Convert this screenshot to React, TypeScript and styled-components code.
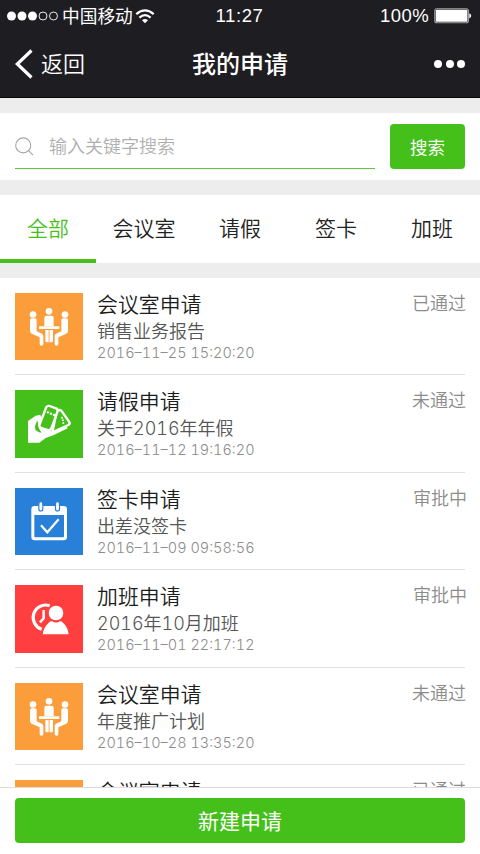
import React from "react";
import styled, { createGlobalStyle } from "styled-components";

const GREEN = "#45c01a";

const GlobalStyle = createGlobalStyle`
  * { box-sizing: border-box; }
  html, body { margin: 0; padding: 0; background: #fff; }
  body { font-family: Inter, "Noto Sans CJK SC", sans-serif; }
  button, input { font-family: inherit; border: 0; padding: 0; margin: 0; }
`;

const Screen = styled.div`
  width: 480px;
  height: 854px;
  overflow: hidden;
  display: flex;
  flex-direction: column;
  background: #ededed;
`;

const Header = styled.header`
  flex: none;
  height: 97.5px;
  background: #1e1d22;
  border-bottom: 1.5px solid #09090b;
  color: #fff;
`;

const StatusBar = styled.div`
  height: 30px;
  padding: 0 8px 0 7px;
  display: grid;
  grid-template-columns: 1fr auto 1fr;
  align-items: center;
  font-size: 18px;
  line-height: 32px;
`;

const StatusGroup = styled.div<{ $end?: boolean }>`
  display: flex;
  align-items: center;
  justify-content: ${(p) => (p.$end ? "flex-end" : "flex-start")};
  height: 30px;
`;

const Carrier = styled.span`
  margin: 1px 2px 0 3px;
  font-size: 17.7px;
`;

const Clock = styled.span`
  font-family: "Liberation Sans", sans-serif;
  font-size: 18.5px;
  letter-spacing: 0.6px;
`;

const Percent = styled.span`
  margin-right: 5px;
  font-family: "Liberation Sans", sans-serif;
  font-size: 18.5px;
  letter-spacing: 0.4px;
`;

const NavBar = styled.div`
  height: 67px;
  padding: 0 15px;
  display: grid;
  grid-template-columns: 1fr auto 1fr;
  align-items: center;
`;

const Back = styled.button`
  display: flex;
  align-items: center;
  gap: 8px;
  background: none;
  color: #fff;
  font-size: 22px;
  font-weight: 350;
  line-height: 30px;
`;

const PageTitle = styled.h1`
  margin: 2px 0 0;
  font-size: 24px;
  line-height: 34px;
  font-weight: 500;
`;

const More = styled.button`
  justify-self: end;
  display: flex;
  gap: 3.5px;
  background: none;
`;

const MoreDot = styled.i`
  width: 8px;
  height: 8px;
  border-radius: 50%;
  background: #fff;
`;

const SearchPanel = styled.form`
  flex: none;
  margin-top: 15px;
  height: 67.5px;
  padding: 11.5px 15px 0;
  display: flex;
  align-items: flex-start;
  gap: 15px;
  background: #fff;
`;

const SearchField = styled.label`
  flex: 1;
  height: 45px;
  display: flex;
  align-items: center;
  gap: 15px;
  border-bottom: 1px solid #5fc93b;
`;

const SearchInput = styled.input`
  flex: 1;
  min-width: 0;
  height: 30px;
  padding-top: 1px;
  outline: none;
  font-size: 18px;
  font-weight: 350;
  color: #333;
  &::placeholder { color: #b0b0b0; opacity: 1; }
`;

const SearchButton = styled.button`
  width: 75px;
  height: 45px;
  padding-bottom: 1px;
  border-radius: 4px;
  background: ${GREEN};
  color: #fff;
  font-size: 17.5px;
`;

const Tabs = styled.nav`
  flex: none;
  margin-top: 15px;
  height: 68px;
  display: grid;
  grid-template-columns: repeat(5, 1fr);
  background: #fff;
`;

const Tab = styled.button<{ $active?: boolean }>`
  border-bottom: 4px solid ${(p) => (p.$active ? GREEN : "transparent")};
  background: none;
  color: ${(p) => (p.$active ? GREEN : "#222")};
  font-size: 21px;
  font-weight: 350;
  white-space: nowrap;
`;

const List = styled.main`
  flex: 1;
  min-height: 0;
  margin-top: 14.5px;
  padding: 0 15px;
  overflow: hidden;
  background: #fff;
`;

const Row = styled.article`
  height: 97.55px;
  padding-top: 15px;
  display: flex;
  border-bottom: 1px solid #e0e0e0;
`;

const Tile = styled.div<{ $color: string }>`
  flex: none;
  width: 67.5px;
  height: 67.5px;
  background: ${(p) => p.$color};
  svg { display: block; }
`;

const Info = styled.div`
  flex: 1;
  margin-left: 14.5px;
  white-space: nowrap;
`;

const Title = styled.h2`
  margin: -2px 0 0;
  font-size: 20.9px;
  line-height: 28px;
  font-weight: 350;
  color: #1c1c1c;
`;

const Detail = styled.p`
  margin: 1px 0 0;
  font-size: 18px;
  line-height: 23px;
  font-weight: 350;
  color: #555;
  font-variant-numeric: tabular-nums;
`;

const Time = styled.time`
  display: block;
  font-size: 14.5px;
  line-height: 20px;
  font-weight: 300;
  font-variant-numeric: tabular-nums;
  color: #8c8c8c;
`;

const Status = styled.span<{ $shift?: boolean }>`
  margin-top: -2px;
  margin-right: ${(p) => (p.$shift ? "-2px" : "-1px")};
  font-size: 18px;
  line-height: 26px;
  font-weight: 350;
  color: #8c8c8c;
`;

const Footer = styled.footer`
  flex: none;
  height: 67.5px;
  padding: 10px 15px 0;
  border-top: 1px solid #dcdcdc;
  background: #fff;
`;

const CreateButton = styled.button`
  display: block;
  width: 100%;
  height: 45px;
  padding-bottom: 1px;
  border-radius: 4px;
  background: ${GREEN};
  color: #fff;
  font-size: 21px;
`;

const Signal = () => (
  <svg width="52" height="10" viewBox="0 0 52 10">
    {[4.5, 15, 25.5].map((x) => <circle key={x} cx={x} cy="5" r="4.5" fill="#fff" />)}
    {[36, 46.5].map((x) => <circle key={x} cx={x} cy="5" r="4" fill="none" stroke="#fff" strokeWidth="0.9" />)}
  </svg>
);

const Wifi = () => (
  <svg width="20" height="15" viewBox="0 0 20 15" fill="none" stroke="#fff" strokeWidth="2.2">
    <path d="M1.3 5.1Q10-2.2 18.7 5.1M4.4 8.6Q10 3.8 15.6 8.6" />
    <path d="M7 11.2Q10 8.6 13 11.2L10 14.2Z" fill="#fff" stroke="none" />
  </svg>
);

const Battery = () => (
  <svg width="38" height="16" viewBox="0 0 38 16">
    <rect x="0.8" y="0.8" width="33.6" height="14" rx="2" fill="none" stroke="#a5a5a8" strokeWidth="1.1" />
    <rect x="1.8" y="1.8" width="31.6" height="12" rx="0.8" fill="#fff" />
    <path d="M35.3 5.2Q37.2 6 37.2 7.8T35.3 10.4Z" fill="#fff" />
  </svg>
);

const Chevron = () => (
  <svg width="18" height="30" viewBox="0 0 18 30" fill="none" stroke="#fff" strokeWidth="3.2">
    <path d="M16.5 1.5L2.3 15L16.5 28.5" />
  </svg>
);

const Magnifier = () => (
  <svg width="19" height="19" viewBox="0 0 19 19" fill="none" stroke="#a4a4a4" strokeWidth="1.1">
    <circle cx="8.2" cy="8.4" r="7.5" />
    <path d="M13.5 13.7L18 18.2" />
  </svg>
);

const TileSvg = ({ children }: { children: React.ReactNode }) => (
  <svg width="67.5" height="67.5" viewBox="0 0 202.5 202.5" fill="#fff">{children}</svg>
);

const SEATED = "M45 81Q45 76 50 76H60Q65 76 65 81V115L81 122Q85 124 85 129V153Q85 158 79 158Q74 158 74 153V133L50 122Q45 119 45 114Z";

const MeetingIcon = () => (
  <TileSvg>
    <circle cx="54" cy="64.5" r="10" />
    <circle cx="102" cy="55" r="10" />
    <circle cx="150" cy="64.5" r="10" />
    <path d={SEATED} />
    <path d={SEATED} transform="translate(204 0) scale(-1 1)" />
    <rect x="72" y="100" width="61" height="8" rx="1" />
    <path d="M88 100V74Q88 68 94 68H110Q116 68 116 74V100Z" />
    <path d="M91 111H101V148H95Q91 148 91 144ZM103.5 111H114V144Q114 148 110 148H103.5Z" />
  </TileSvg>
);

const LeaveIcon = () => (
  <TileSvg>
    <path d="M39 93L62 77L76 74L90 120L112 124L151 106L158 115L115 136L92 144L73 158H39Z" />
    <path d="M67 91L60 108L61 120L72 127L80 128L72 116Z" fill={GREEN} />
    <path
      d="M126 61L133 60Q138 60 141 65L163 96Q166 102 160 105L112 127Z"
      fill={GREEN} stroke="#fff" strokeWidth="7" strokeLinejoin="round"
    />
    <path
      d="M94 51Q98 46 104 48L123 55Q130 58 127 66L109 115Q106 122 99 120L80 114Q71 111 74 103Z"
      fill={GREEN} stroke="#fff" strokeWidth="7" strokeLinejoin="round"
    />
    <circle cx="99" cy="67" r="3.5" />
    <circle cx="108" cy="71" r="3.5" />
    <circle cx="117" cy="75" r="3.5" />
    <circle cx="141" cy="83" r="3" />
    <circle cx="144" cy="91" r="3" />
    <circle cx="145" cy="99" r="3" />
  </TileSvg>
);

const CardIcon = () => (
  <TileSvg>
    <path fillRule="evenodd" d="M59 54H146Q156 54 156 64V147Q156 157 146 157H59Q49 157 49 147V64Q49 54 59 54ZM58 81V145Q58 148 61 148H144Q147 148 147 145V81Z" />
    <g stroke="#2980d9" strokeWidth="3.5">
      <rect x="71.5" y="41" width="12" height="28" rx="6" />
      <rect x="121.5" y="41" width="12" height="28" rx="6" />
    </g>
    <path d="M78 112L97 133L131 94" fill="none" stroke="#fff" strokeWidth="6.5" />
  </TileSvg>
);

const OvertimeIcon = () => (
  <TileSvg>
    <path d="M104 62A37 37 0 1 0 80 133" fill="none" stroke="#fff" strokeWidth="9.5" />
    <path d="M86 75V100L75 112" fill="none" stroke="#fff" strokeWidth="7.5" />
    <circle cx="123" cy="84" r="25.5" fill="#ff3f3f" />
    <path d="M79 150Q84 106 122 106Q163 106 165 150Z" fill="#ff3f3f" />
    <circle cx="123" cy="84" r="22" />
    <path d="M83 148Q85 128 101 113Q109 106 116 111Q123 114 130 111Q137 106 144 113Q158 125 161 148Z" />
  </TileSvg>
);

const kinds = {
  meeting: { color: "#fc9d3c", title: "会议室申请", Icon: MeetingIcon },
  leave: { color: GREEN, title: "请假申请", Icon: LeaveIcon },
  card: { color: "#2980d9", title: "签卡申请", Icon: CardIcon },
  overtime: { color: "#ff3f3f", title: "加班申请", Icon: OvertimeIcon },
};

const requests: { kind: keyof typeof kinds; detail: string; time: string; status: string }[] = [
  { kind: "meeting", detail: "销售业务报告", time: "2016–11–25 15:20:20", status: "已通过" },
  { kind: "leave", detail: "关于2016年年假", time: "2016–11–12 19:16:20", status: "未通过" },
  { kind: "card", detail: "出差没签卡", time: "2016–11–09 09:58:56", status: "审批中" },
  { kind: "overtime", detail: "2016年10月加班", time: "2016–11–01 22:17:12", status: "审批中" },
  { kind: "meeting", detail: "年度推广计划", time: "2016–10–28 13:35:20", status: "未通过" },
  { kind: "meeting", detail: "", time: "", status: "已通过" },
];

export default function App() {
  return (
    <Screen>
      <GlobalStyle />
      <Header>
        <StatusBar>
          <StatusGroup>
            <Signal />
            <Carrier>中国移动</Carrier>
            <Wifi />
          </StatusGroup>
          <Clock>11:27</Clock>
          <StatusGroup $end>
            <Percent>100%</Percent>
            <Battery />
          </StatusGroup>
        </StatusBar>
        <NavBar>
          <Back><Chevron />返回</Back>
          <PageTitle>我的申请</PageTitle>
          <More aria-label="更多"><MoreDot /><MoreDot /><MoreDot /></More>
        </NavBar>
      </Header>
      <SearchPanel>
        <SearchField>
          <Magnifier />
          <SearchInput placeholder="输入关键字搜索" />
        </SearchField>
        <SearchButton type="button">搜索</SearchButton>
      </SearchPanel>
      <Tabs>
        {["全部", "会议室", "请假", "签卡", "加班"].map((label, i) => (
          <Tab key={label} $active={i === 0}>{label}</Tab>
        ))}
      </Tabs>
      <List>
        {requests.map((r, i) => {
          const { color, title, Icon } = kinds[r.kind];
          return (
            <Row key={i}>
              <Tile $color={color}><Icon /></Tile>
              <Info>
                <Title>{title}</Title>
                <Detail>{r.detail}</Detail>
                <Time>{r.time}</Time>
              </Info>
              <Status $shift={r.status === "审批中"}>{r.status}</Status>
            </Row>
          );
        })}
      </List>
      <Footer>
        <CreateButton>新建申请</CreateButton>
      </Footer>
    </Screen>
  );
}
